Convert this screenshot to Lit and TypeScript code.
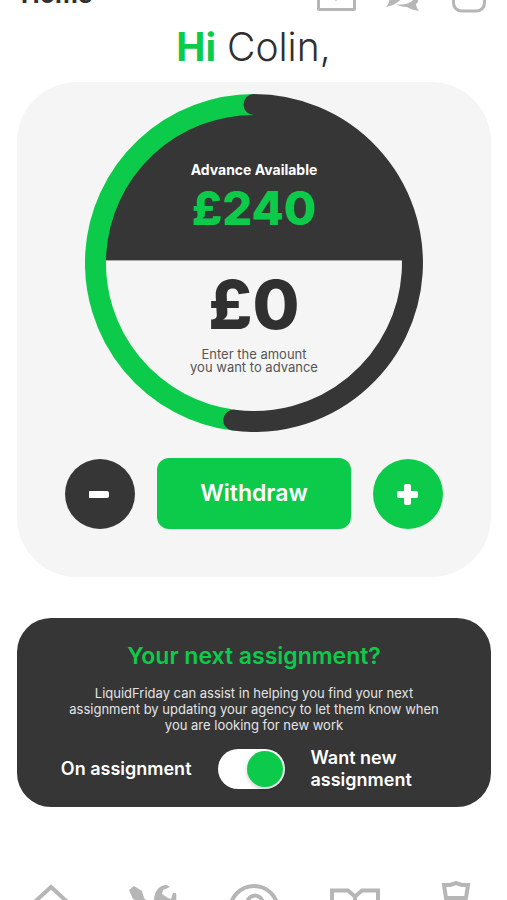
import { LitElement, html, css, svg } from "lit";
import { customElement, state } from "lit/decorators.js";

const icons = {
  inbox: svg`<rect x="1.5" y="2" width="36" height="34.5" rx="1"/><path d="M19 8v16M17 24l2 2 2-2"/>`,
  chat: svg`<path class="fill" d="M2 20C2 10 12 4 22 8c-6 4-8 12-4 18-4 5-10 7-15 8 3-4 4-6 3-8-3-2-4-3-4-6z"/><path class="fill" d="M13 31c10 2 18-2 20-9 3 4 3 7 0 9 0 2 1 4 3 7-5-1-9-2-12-4-5 0-8-1-11-3z"/>`,
  device: svg`<rect x="4.5" y="3" width="31" height="35" rx="8"/>`,
  home: svg`<path class="thick" d="M2 30 26 8 50 30M11 24v26h11V37h8v14h11V24"/>`,
  tools: svg`<path class="fill" d="m3 11 5-4 8 5 2 7 29 29-4 5L14 23l-7-3z"/><path class="fill" d="m7 48 21-22c-1-12 4-20 13-20l3 2-7 3-1 4 6 4 3 1 2-6h3c2 12-4 18-14 17L13 54z"/>`,
  account: svg`<circle class="thick" cx="27" cy="31" r="24"/><circle class="thick" cx="28" cy="24" r="7.5"/><path class="thick" d="M12 49c2-11 28-11 30 0"/>`,
  book: svg`<path class="thick" d="M3 11.5h16l7 6 7-6h16v35H33l-7 4-7-4H3zM26 18v33"/>`,
  worker: svg`<path class="thick" d="M14 6h6l6-2 6 2h6l-2 13H16zM17 20c0 18 18 18 18 0M8 52c0-22 36-22 36 0z"/>`,
};

@customElement("app-root")
export class AppRoot extends LitElement {
  @state() private amount = 0;
  @state() private wantsNew = true;
  private readonly available = 240;

  static styles = css`
    :host {
      --green: #0dcb4a;
      --dark: #363636;
      --grey: #b6b6b6;
      display: block;
      font-family: Inter, "Liberation Sans", sans-serif;
      color: #303030;
      background: #fff;
    }
    * { box-sizing: border-box; }
    h1, h2, p { margin: 0; }
    button { border: 0; padding: 0; font: inherit; cursor: pointer; background: none; }
    .screen {
      height: 100vh;
      overflow: hidden;
      display: flex;
      flex-direction: column;
    }
    .screen > * { flex-shrink: 0; }
    .top {
      height: 13px;
      overflow: hidden;
      display: flex;
      align-items: flex-end;
      justify-content: space-between;
      padding: 0 18px 0 21px;
    }
    .title { font-size: 25px; line-height: 24px; font-weight: 700; padding-bottom: 7px; }
    .actions { display: flex; align-items: flex-end; gap: 26px; }
    .action { display: block; height: 40px; color: var(--grey); }
    svg { display: block; }
    .icon { fill: none; stroke: currentColor; stroke-width: 3; }
    .icon .thick { stroke-width: 4; }
    .icon .fill { fill: currentColor; stroke: none; }
    .greeting {
      font-size: 39px;
      line-height: 48px;
      font-weight: 350;
      text-align: center;
      margin-top: 10px;
    }
    .greeting strong { font-weight: 700; color: var(--green); }
    .advance {
      margin: 11px 16px 0 17px;
      padding: 12px 16px 48px;
      border-radius: 60px;
      background: #f5f5f5;
      display: flex;
      flex-direction: column;
      align-items: center;
      gap: 26px;
    }
    .dial { display: grid; width: 338px; max-width: 100%; }
    .dial > * { grid-area: 1 / 1; }
    .ring { width: 100%; }
    .ring .arc { fill: none; stroke-width: 21; }
    .ring .track { stroke: var(--green); }
    .ring .used { stroke: var(--dark); stroke-linecap: round; }
    .ring .upper { fill: var(--dark); }
    .readout {
      display: grid;
      grid-template-rows: 166px 1fr;
      text-align: center;
    }
    .half { display: flex; flex-direction: column; align-items: center; }
    .half.over { color: #fff; padding-top: 68px; gap: 4px; }
    .caption { font-size: 14px; line-height: 16px; font-weight: 700; }
    .limit, .amount { font-weight: 800; }
    .limit { font-size: 47px; line-height: 52px; color: var(--green); }
    .half.under { padding-top: 8px; gap: 8px; }
    .amount { font-size: 68px; line-height: 72px; }
    .hint { font-size: 13px; line-height: 13px; color: #555; }
    .controls { display: flex; align-items: center; justify-content: center; gap: 22px; width: 100%; }
    .step {
      width: 70px;
      height: 70px;
      border-radius: 50%;
      display: grid;
      place-items: center;
      color: #fff;
      background: var(--green);
    }
    .step.minus { background: var(--dark); }
    .step svg { fill: currentColor; }
    .withdraw {
      width: 194px;
      height: 71px;
      padding-bottom: 2px;
      border-radius: 12px;
      background: var(--green);
      color: #fff;
      font-size: 23px;
      font-weight: 600;
    }
    .assignment {
      margin: 41px 16px 0 17px;
      padding: 24px 40px 16px;
      border-radius: 34px;
      background: var(--dark);
      color: #fff;
      text-align: center;
    }
    .heading { font-size: 23px; line-height: 28px; font-weight: 600; color: var(--green); }
    .text { max-width: 384px; margin: 15px auto 14px; font-size: 13px; line-height: 16px; color: #e4e4e4; }
    .choice {
      display: grid;
      grid-template-columns: 1fr 67px 1fr;
      align-items: center;
      gap: 26px;
      margin-right: 6px;
      font-size: 18px;
      line-height: 22px;
      font-weight: 600;
      text-align: left;
      cursor: pointer;
    }
    .choice .off { text-align: right; }
    .switch {
      appearance: none;
      margin: 0;
      width: 67px;
      height: 40px;
      padding: 2px;
      border-radius: 20px;
      background: #fff;
      display: flex;
      cursor: pointer;
    }
    .switch::before {
      content: "";
      width: 36px;
      height: 36px;
      border-radius: 50%;
      background: var(--grey);
      box-shadow: 0 2px 4px rgb(0 0 0 / 20%);
    }
    .switch:checked { justify-content: flex-end; }
    .switch:checked::before { background: var(--green); }
    .tabs { display: grid; grid-template-columns: repeat(5, 1fr); margin-top: 72px; }
    .tab { display: grid; place-items: center; color: var(--grey); }
  `;

  private change(step: number) {
    this.amount = Math.min(this.available, Math.max(0, this.amount + step));
  }

  private action(name: "inbox" | "chat" | "device", label: string) {
    return html`<button class="action" aria-label=${label}>
      <svg class="icon" width="40" height="40" viewBox="0 0 40 40">${icons[name]}</svg>
    </button>`;
  }

  private tab(name: "home" | "tools" | "account" | "book" | "worker", label: string) {
    return html`<a class="tab" href="#${name}" aria-label=${label}>
      <svg class="icon" width="52" height="58" viewBox="0 0 52 58">${icons[name]}</svg>
    </a>`;
  }

  render() {
    return html`<div class="screen">
      <header class="top">
        <h1 class="title">Home</h1>
        <div class="actions">
          ${this.action("inbox", "Inbox")}${this.action("chat", "Chat")}${this.action("device", "Device")}
        </div>
      </header>
      <p class="greeting"><strong>Hi</strong> Colin,</p>
      <section class="advance">
        <div class="dial">
          <svg class="ring" viewBox="0 0 338 338">
            <path class="upper" d="M20 166A149 149 0 0 1 318 166z"/>
            <path d="M21 166.5H317" stroke="#aaa"/>
            <path class="arc track" d="M148.7 326.2A158.5 158.5 0 0 1 169 10.5"/>
            <path class="arc used" d="M169 10.5A158.5 158.5 0 1 1 148.7 326.2"/>
          </svg>
          <div class="readout">
            <div class="half over">
              <span class="caption">Advance Available</span>
              <span class="limit">£${this.available}</span>
            </div>
            <div class="half under">
              <output class="amount">£${this.amount}</output>
              <p class="hint">Enter the amount<br />you want to advance</p>
            </div>
          </div>
        </div>
        <div class="controls">
          <button class="step minus" aria-label="Less" @click=${() => this.change(-10)}>
            <svg width="22" height="22" viewBox="0 0 22 22"><rect x="-1" y="8" width="21" height="7" rx="2"/></svg>
          </button>
          <button class="withdraw">Withdraw</button>
          <button class="step" aria-label="More" @click=${() => this.change(10)}>
            <svg width="22" height="22" viewBox="0 0 22 22"><rect x="0" y="8" width="21" height="7" rx="2"/><rect x="7" y="1" width="7" height="21" rx="2"/></svg>
          </button>
        </div>
      </section>
      <section class="assignment">
        <h2 class="heading">Your next assignment?</h2>
        <p class="text">LiquidFriday can assist in helping you find your next assignment by updating your agency to let them know when you are looking for new work</p>
        <label class="choice">
          <span class="off">On assignment</span>
          <input class="switch" type="checkbox" role="switch" .checked=${this.wantsNew}
            @change=${(e: Event) => (this.wantsNew = (e.target as HTMLInputElement).checked)} />
          <span>Want new assignment</span>
        </label>
      </section>
      <nav class="tabs">
        ${this.tab("home", "Home")}${this.tab("tools", "Tools")}${this.tab("account", "Account")}${this.tab("book", "Guide")}${this.tab("worker", "Work")}
      </nav>
    </div>`;
  }
}
